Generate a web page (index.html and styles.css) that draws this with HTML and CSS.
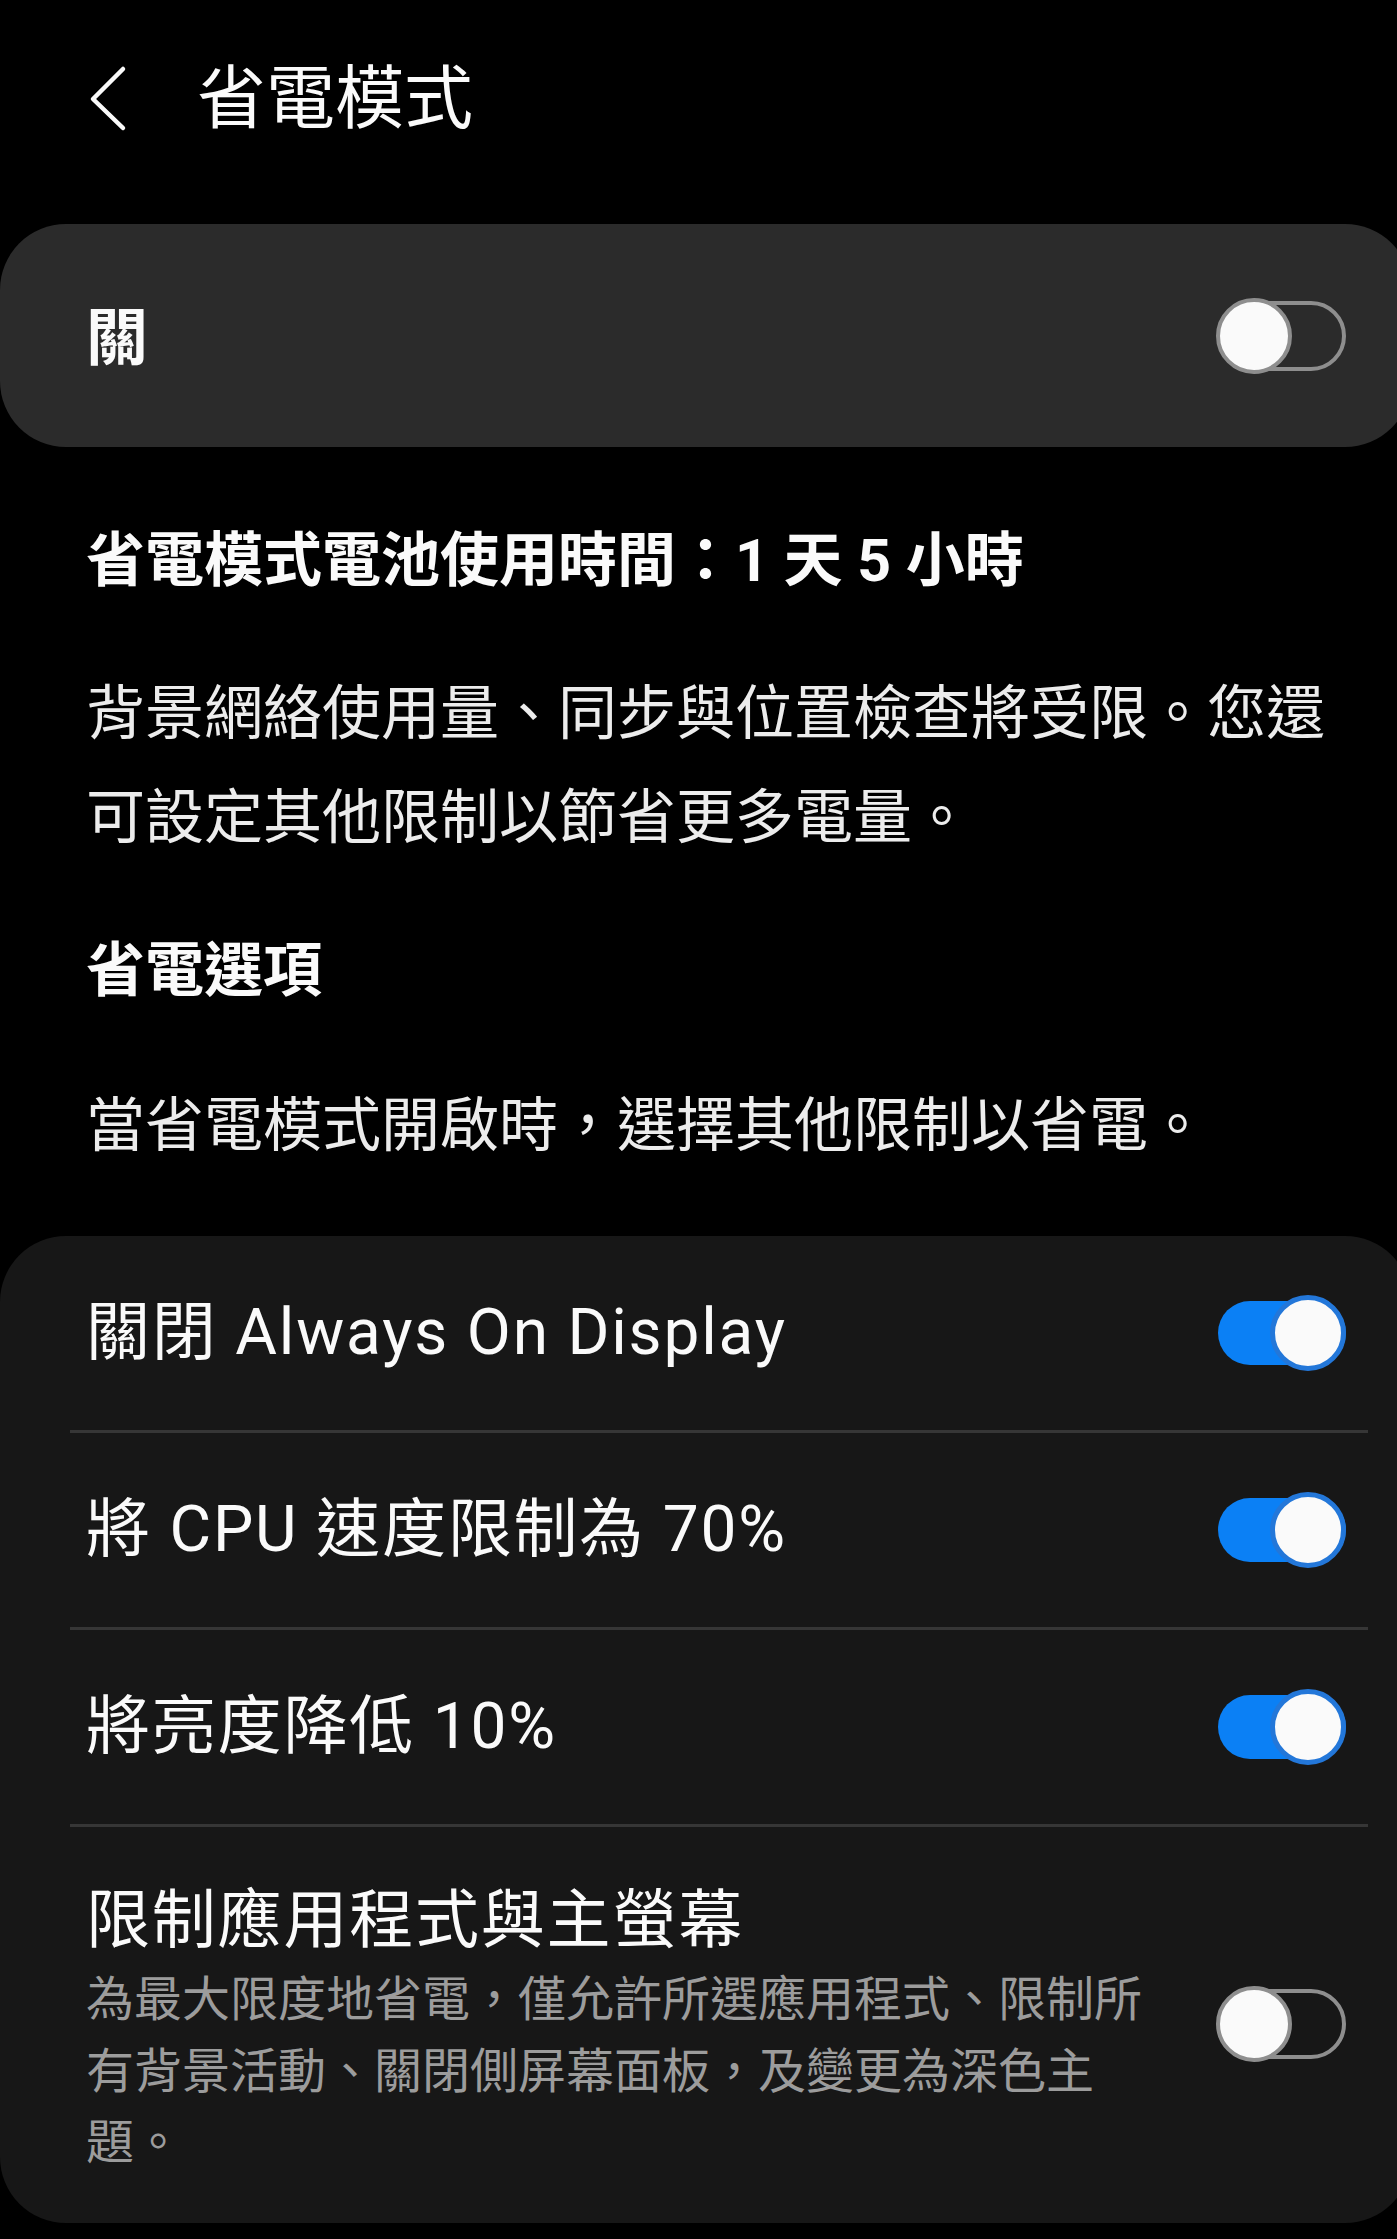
FILE: index.html
```html
<!DOCTYPE html>
<html lang="zh-Hant">
<head>
<meta charset="UTF-8">
<meta name="viewport" content="width=device-width, initial-scale=1.0">
<title>省電模式</title>
<link rel="stylesheet" href="styles.css">
</head>
<body>
<div class="screen">
  <div class="header">
    <svg class="back" width="44" height="70" viewBox="0 0 44 70">
      <path d="M39 4 L9 34 L39 63" fill="none" stroke="#fafafa" stroke-width="4.5" stroke-linecap="round" stroke-linejoin="round"/>
    </svg>
    <h1 class="title">省電模式</h1>
  </div>

  <div class="master-card">
    <span class="master-label">關</span>
    <span class="toggle off"><span class="track"></span><span class="knob"></span></span>
  </div>

  <div class="info">
    <p class="summary">省電模式電池使用時間：1 天 5 小時</p>
    <p class="desc">背景網絡使用量、同步與位置檢查將受限。您還可設定其他限制以節省更多電量。</p>
    <p class="section-title">省電選項</p>
    <p class="desc hint">當省電模式開啟時，選擇其他限制以省電。</p>
  </div>

  <div class="options-card">
    <div class="row">
      <span class="row-label">關閉 Always On Display</span>
      <span class="toggle on"><span class="track"></span><span class="knob"></span></span>
    </div>
    <div class="row">
      <span class="row-label">將 CPU 速度限制為 70%</span>
      <span class="toggle on"><span class="track"></span><span class="knob"></span></span>
    </div>
    <div class="row">
      <span class="row-label">將亮度降低 10%</span>
      <span class="toggle on"><span class="track"></span><span class="knob"></span></span>
    </div>
    <div class="row row-tall">
      <div class="row-text">
        <span class="row-label">限制應用程式與主螢幕</span>
        <span class="row-sub">為最大限度地省電，僅允許所選應用程式、限制所有背景活動、關閉側屏幕面板，及變更為深色主題。</span>
      </div>
      <span class="toggle off"><span class="track"></span><span class="knob"></span></span>
    </div>
  </div>
</div>
</body>
</html>
```

FILE: styles.css
```css
html, body {
    margin: 0;
    padding: 0;
    background-color: #000;
}

body {
    font-family: Roboto, "Noto Sans CJK TC", "Noto Sans", sans-serif;
    color: #fafafa;
}

.screen {
    width: 1397px;
    min-height: 2239px;
    overflow: hidden;
}

/* header */
.header {
    height: 200px;
    display: flex;
    align-items: center;
    padding-left: 84px;
}

.back {
    display: block;
    margin-right: 69px;
}

.title {
    margin: 0;
    font-size: 69px;
    font-weight: 400;
    line-height: 80px;
    color: #fafafa;
}

/* master switch card */
.master-card {
    margin-top: 24px;
    margin-right: -14px;
    height: 223px;
    box-sizing: border-box;
    padding: 0 65px 0 86px;
    display: flex;
    align-items: center;
    justify-content: space-between;
    background-color: #2b2b2b;
    border-radius: 66px;
}

.master-label {
    font-size: 62px;
    font-weight: 700;
    line-height: 80px;
    margin-top: 6px;
}

/* info texts */
.info {
    padding: 0 50px 0 86px;
}

.info p {
    margin: 0;
}

.summary,
.section-title {
    font-size: 59px;
    font-weight: 700;
    line-height: 80px;
    color: #fafafa;
    margin-top: 74px !important;
}

.section-title {
    margin-top: 61px !important;
}

.desc {
    font-size: 59px;
    font-weight: 400;
    line-height: 104px;
    color: #ececec;
    margin-top: 61px !important;
}

.hint {
    margin-top: 63px !important;
}

/* options card */
.options-card {
    margin-top: 58px;
    margin-right: -14px;
    padding: 0 43px 0 70px;
    background-color: #171717;
    border-radius: 66px;
}

.row {
    height: 194px;
    display: flex;
    align-items: center;
    justify-content: space-between;
    padding: 0 22px 0 16px;
    border-bottom: 3px solid #363636;
}

.row-tall {
    height: auto;
    padding-top: 54px;
    padding-bottom: 44px;
    border-bottom: none;
}

.row-tall .toggle {
    margin-bottom: 12px;
}

.row-label {
    font-size: 64px;
    letter-spacing: 1.8px;
    line-height: 80px;
    color: #fafafa;
}

.row-text {
    width: 1075px;
    display: flex;
    flex-direction: column;
}

.row-sub {
    margin-top: 3px;
    font-size: 48px;
    line-height: 71.5px;
    color: #9c9c9c;
}

/* switches */
.toggle {
    position: relative;
    flex-shrink: 0;
    width: 130px;
    height: 78px;
}

.toggle .track {
    position: absolute;
    top: 50%;
    right: 0;
    box-sizing: border-box;
    transform: translateY(-50%);
}

.toggle .knob {
    position: absolute;
    top: 1px;
    width: 76px;
    height: 76px;
    box-sizing: border-box;
    border-radius: 50%;
    background-color: #fafafa;
}

.toggle.off .track {
    width: 116px;
    height: 70px;
    border: 4px solid #8e8e8e;
    border-radius: 35px;
}

.toggle.off .knob {
    left: 0;
    border: 4px solid #8e8e8e;
}

.toggle.on .track {
    width: 128px;
    height: 64px;
    border-radius: 32px;
    background-color: #0b80f5;
}

.toggle.on .knob {
    right: 0;
    border: 5px solid #2377d9;
}
```
